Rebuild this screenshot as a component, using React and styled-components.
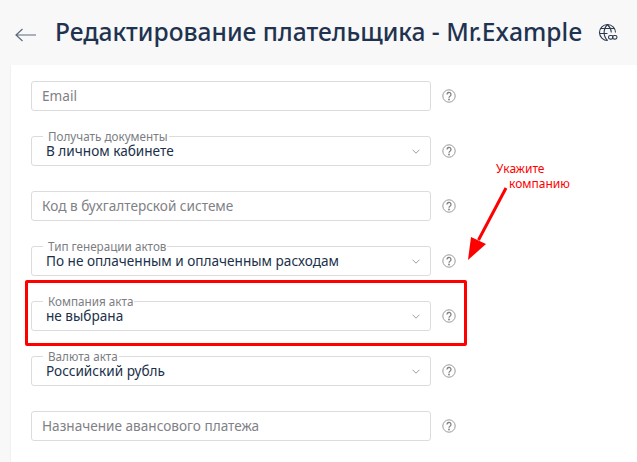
import React from "react";
import styled, { createGlobalStyle } from "styled-components";

const GlobalStyle = createGlobalStyle`
  html, body {
    margin: 0;
    padding: 0;
    background: #fff;
    font-family: "Noto Sans", "Open Sans", sans-serif;
  }
`;

const Page = styled.div`
  position: relative;
  width: 637px;
  height: 462px;
  overflow: hidden;
  background: #f8f8f8;
`;

const Header = styled.header`
  display: flex;
  align-items: center;
  gap: 19px;
  height: 65px;
  padding-left: 15px;
  color: #1f3350;
`;

const Title = styled.h1`
  margin: 0 0 2px;
  font-size: 24.6px;
  font-weight: 500;
  white-space: nowrap;
`;

const Panel = styled.main`
  display: flex;
  flex-direction: column;
  gap: 25px;
  height: 397px;
  margin-left: 10px;
  padding: 16px 0 0 20px;
  background: #fff;
  border-left: 1px solid #f1f1f1;
  box-sizing: border-box;
`;

const Row = styled.div`
  display: flex;
  align-items: center;
  gap: 11px;
`;

const Box = styled.div`
  position: relative;
  display: flex;
  align-items: center;
  justify-content: space-between;
  width: 400px;
  height: 30px;
  box-sizing: border-box;
  border: 1px solid #dcdcdc;
  border-radius: 3px;
  padding: ${(p) => (p.$select ? "1px 10px 1px 14px" : "1px 10px 1px 10px")};
  font-size: 13.6px;
  line-height: 16px;
`;

const Placeholder = styled.span`
  color: #7f8186;
`;

const Value = styled.span`
  color: #20304a;
`;

const Legend = styled.span`
  position: absolute;
  top: -7px;
  left: 11px;
  padding: 0 1px 0 5px;
  background: #fff;
  color: #7b7d82;
  font-size: 11.7px;
  line-height: 12px;
`;

const Highlight = styled.div`
  position: absolute;
  left: 25px;
  top: 280px;
  width: 442px;
  height: 66px;
  box-sizing: border-box;
  border: 3px solid #fe0000;
  border-radius: 2px;
`;

const Note = styled.div`
  position: absolute;
  left: 496px;
  top: 161px;
  color: #fe0000;
  font-size: 12px;
  line-height: 15px;
`;

const NoteLine = styled.div`
  padding-left: ${(p) => p.$indent || 0}px;
`;

const ArrowMark = styled.svg`
  position: absolute;
  left: 464px;
  top: 182px;
`;

const BackSvg = styled.svg`
  margin-top: 4px;
  flex: none;
`;

const GlobeSvg = styled.svg`
  margin-left: -3px;
  flex: none;
`;

const ChevronSvg = styled.svg`
  flex: none;
`;

const BackArrow = () => (
  <BackSvg width="21" height="14" viewBox="0 0 21 14" fill="none" stroke="#5d6b7c" strokeWidth="1.2">
    <path d="M1 7h20M7.500 1 1 7l6.500 6" />
  </BackSvg>
);

const GlobeIcon = () => (
  <GlobeSvg width="20" height="19" viewBox="0 0 20 19" fill="none" stroke="#2b3a50" strokeWidth="1.1">
    <path d="M9.500 17.500a8 8 0 1 1 8-8" />
    <path d="M9.500 1.500c-4.500 4.500-4.500 11.500 0 16M9.500 1.500c2.500 2.500 3.700 5.500 3.800 8" />
    <path d="M2.500 5.500h14M1.500 10.500h8" />
    <rect x="10.500" y="12.500" width="4.500" height="3.600" rx="1.800" />
    <rect x="14.500" y="12.500" width="4.500" height="3.600" rx="1.800" />
  </GlobeSvg>
);

const HelpIcon = () => (
  <svg width="14" height="14" viewBox="0 0 14 14" fill="none">
    <circle cx="7" cy="7" r="6.200" stroke="#9a9a9a" />
    <path d="M5 5.500a2 2 0 1 1 3 1.700c-.7.4-1 .8-1 1.500" stroke="#808080" strokeWidth="1.300" />
    <circle cx="7" cy="10.500" r=".9" fill="#808080" />
  </svg>
);

const Chevron = () => (
  <ChevronSvg width="8" height="5" viewBox="0 0 8 5" fill="none" stroke="#9a9da2" strokeWidth="1">
    <path d="M.5.700 4 4.200 7.500.7" />
  </ChevronSvg>
);

const fields = [
  { placeholder: "Email" },
  { legend: "Получать документы", value: "В личном кабинете" },
  { placeholder: "Код в бухгалтерской системе" },
  { legend: "Тип генерации актов", value: "По не оплаченным и оплаченным расходам" },
  { legend: "Компания акта", value: "не выбрана" },
  { legend: "Валюта акта", value: "Российский рубль" },
  { placeholder: "Назначение авансового платежа" },
];

const App = () => {
  return (
    <Page>
      <GlobalStyle />
      <Header>
        <BackArrow />
        <Title>Редактирование плательщика - Mr.Example</Title>
        <GlobeIcon />
      </Header>
      <Panel>
        {fields.map((item, i) => (
          <Row key={i}>
            <Box $select={!!item.legend}>
              {item.legend ? (
                <>
                  <Legend>{item.legend}</Legend>
                  <Value>{item.value}</Value>
                  <Chevron />
                </>
              ) : (
                <Placeholder>{item.placeholder}</Placeholder>
              )}
            </Box>
            <HelpIcon />
          </Row>
        ))}
      </Panel>
      <Highlight />
      <Note>
        <NoteLine>Укажите</NoteLine>
        <NoteLine $indent={13}>компанию</NoteLine>
      </Note>
      <ArrowMark width="50" height="82" viewBox="0 0 50 82">
        <path d="M42 6 14.500 58" stroke="#fe0000" strokeWidth="3" fill="none" />
        <path d="M4 78 7 55 22 62Z" fill="#fe0000" />
      </ArrowMark>
    </Page>
  );
};

export default App;
